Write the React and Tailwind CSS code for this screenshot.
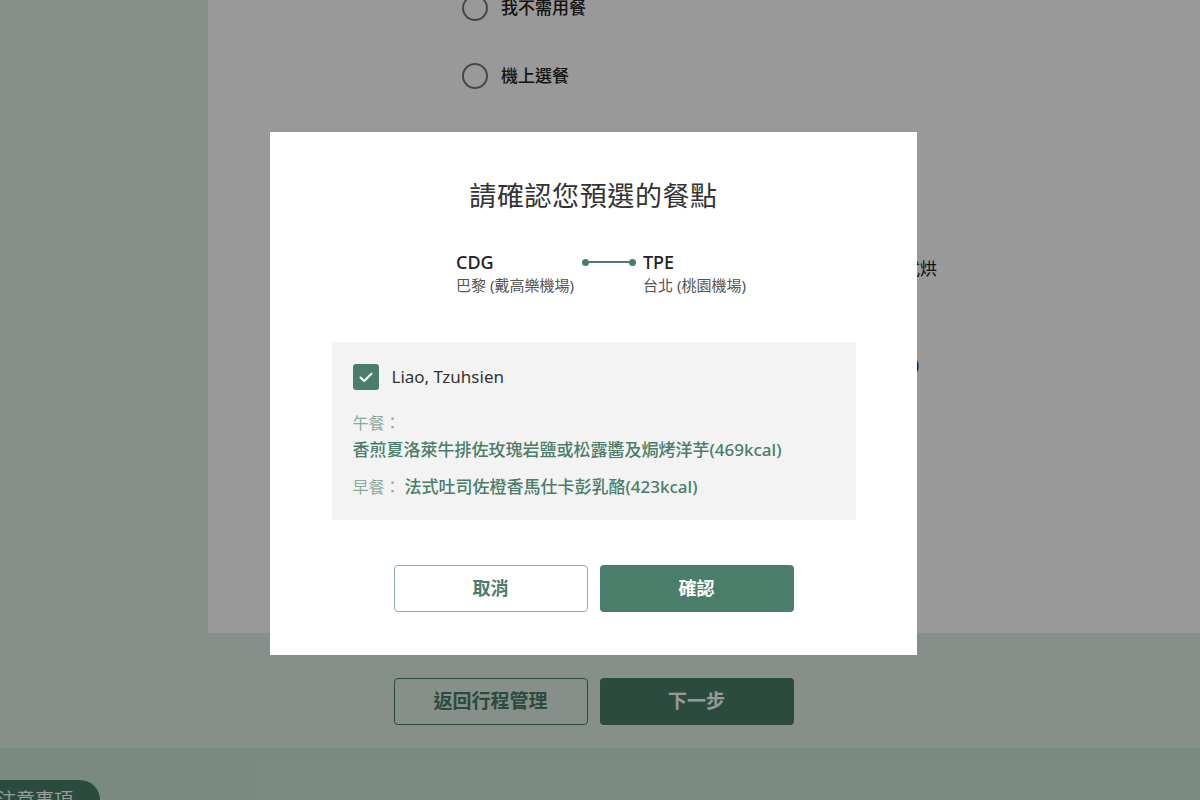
const font = { fontFamily: '"Noto Sans", "Noto Sans CJK TC", sans-serif' };

const Radio = ({ label }) => (
    <div className="flex items-center gap-[13px] h-[26px]">
        <span className="w-[26px] h-[26px] rounded-full border-2 border-[#777] bg-white" />
        <span className="text-[17px] font-medium text-[#222]">{label}</span>
    </div>
);

export default function App() {
    return (
        <div className="relative w-[1200px] h-[800px] overflow-hidden bg-[#e1efe7]" style={font}>
            {/* page behind the dialog */}
            <div className="flex h-[633px]">
                <div className="w-[208px] shrink-0" />
                <div className="flex-1 bg-white pl-[254px] flex flex-col">
                    <div className="-mt-[5px] flex flex-col gap-[42px]">
                        <Radio label="我不需用餐" />
                        <Radio label="機上選餐" />
                    </div>
                    <div className="mt-[167px] w-[475px] text-right text-[17px] leading-[26px] text-[#222]">香草奶油鮭魚佐時蔬與法式烘</div>
                    <div className="mt-[70px] w-[457px] text-right text-[17px] leading-[26px] text-[#222]">經濟艙特別餐(需於48小時前預訂)</div>
                </div>
            </div>
            <div className="h-[115px] flex justify-center items-start pt-[45px] pr-[13px] gap-3">
                <button className="w-[194px] h-[47px] rounded border border-[#4a7d6a] bg-transparent text-[#4a7d6a] text-[19px] font-bold">返回行程管理</button>
                <button className="w-[194px] h-[47px] rounded bg-[#4a7d6a] text-white text-[19px] font-bold">下一步</button>
            </div>
            <div className="h-[52px] bg-[#cbe7db] pt-[32px]">
                <div className="inline-flex items-center h-[40px] bg-[#4a7d6a] rounded-r-[20px] pr-[27px] text-white text-[19px]">
                    <span className="-ml-[3px]">注意事項</span>
                </div>
            </div>

            {/* overlay + dialog */}
            <div className="absolute inset-0 bg-black/40 flex justify-center items-start pt-[132px] pr-[13px]">
                <div className="w-[647px] h-[523px] bg-white flex flex-col items-center">
                    <h2 className="pt-[45px] text-[27px] leading-[38px] font-normal text-[#333] tracking-[0.6px]">請確認您預選的餐點</h2>

                    <div className="w-full pl-[186px] mt-[36px] flex items-start">
                        <div className="w-[126px]">
                            <div className="text-[18px] leading-[22px] font-medium text-[#222]">CDG</div>
                            <div className="text-[15px] leading-[20px] text-[#555] mt-[2px]">巴黎 (戴高樂機場)</div>
                        </div>
                        <div className="w-[54px] h-[22px] flex items-center">
                            <span className="w-[7px] h-[7px] rounded-full bg-[#4a7d6a]" />
                            <span className="flex-1 h-[2px] bg-[#4a7d6a]" />
                            <span className="w-[7px] h-[7px] rounded-full bg-[#4a7d6a]" />
                        </div>
                        <div className="ml-[7px]">
                            <div className="text-[18px] leading-[22px] font-medium text-[#222]">TPE</div>
                            <div className="text-[15px] leading-[20px] text-[#555] mt-[2px]">台北 (桃園機場)</div>
                        </div>
                    </div>

                    <div className="mt-[47px] w-[524px] h-[178px] bg-[#f3f3f3] pt-[22px] pl-[21px]">
                        <div className="flex items-center gap-[13px] h-[26px]">
                            <span className="w-[26px] h-[26px] rounded-[3px] bg-[#4a7d6a] flex items-center justify-center">
                                <svg width="14" height="11" viewBox="0 0 14 11" fill="none">
                                    <path d="M1.5 5.5 L5.2 9 L12.5 1.8" stroke="white" strokeWidth="2" strokeLinecap="round" strokeLinejoin="round" />
                                </svg>
                            </span>
                            <span className="text-[17px] text-[#333]">Liao, Tzuhsien</span>
                        </div>
                        <div className="mt-[22px] text-[16px] leading-[22px] text-[#8aab9c]">午餐：</div>
                        <div className="mt-[3px] text-[17px] leading-[26px] font-medium text-[#4a7d6a]">香煎夏洛萊牛排佐玫瑰岩鹽或松露醬及焗烤洋芋(469kcal)</div>
                        <div className="mt-[11px] flex items-baseline text-[17px] leading-[26px]">
                            <span className="text-[16px] text-[#8aab9c] w-[52px]">早餐：</span>
                            <span className="font-medium text-[#4a7d6a]">法式吐司佐橙香馬仕卡彭乳酪(423kcal)</span>
                        </div>
                    </div>

                    <div className="mt-[45px] flex gap-3">
                        <button className="w-[194px] h-[47px] rounded border border-[#8fb1a3] bg-white text-[#4a7d6a] text-[18px] font-bold">取消</button>
                        <button className="w-[194px] h-[47px] rounded bg-[#4a7d6a] text-white text-[18px] font-bold">確認</button>
                    </div>
                </div>
            </div>
        </div>
    );
}
